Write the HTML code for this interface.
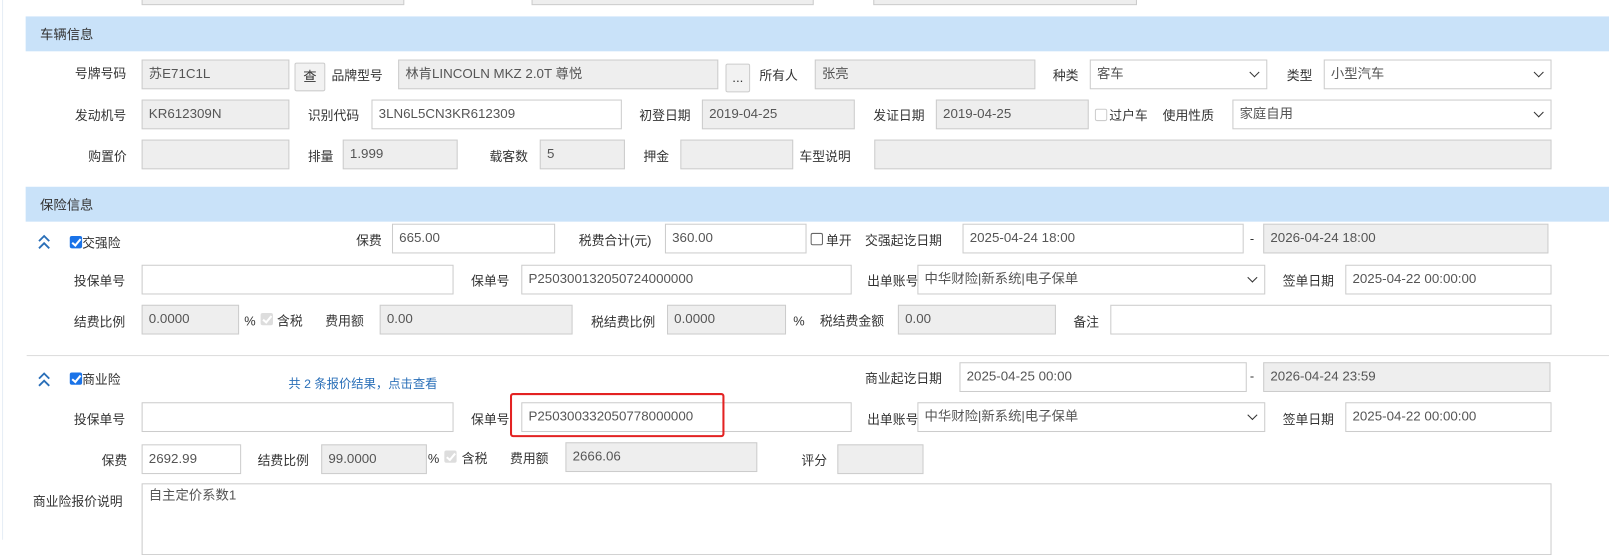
<!DOCTYPE html>
<html><head><meta charset="utf-8"><style>
*{box-sizing:border-box;margin:0;padding:0}
body{width:1609px;height:526px;background:#fff;position:relative;overflow:hidden;font-family:"Liberation Sans","Noto Sans CJK SC",sans-serif;font-size:13px;color:#333}
#w{position:absolute;left:0;top:0;width:1568px;height:513px;transform:scale(1.02615);transform-origin:0 0}
.a{position:absolute}
.l{position:absolute;white-space:nowrap;line-height:16px;font-size:12.5px}
.i{position:absolute;border:1px solid #ccc;background:#eee;height:29px;padding:4px 6px;color:#555;white-space:nowrap;line-height:18px}
.w{background:#fff}
.s:after{content:"";position:absolute;right:8px;top:8px;width:6px;height:6px;border-right:1.5px solid #333;border-bottom:1.5px solid #333;transform:rotate(45deg)}
.h{position:absolute;left:25px;right:0;height:34px;background:#c9e2f9;padding:10px 14px;line-height:16px}
.b{position:absolute;border:1px solid #ccc;background:#f2f2f2;border-radius:2px;height:28px;text-align:center;line-height:26px}
.cb{position:absolute;width:12px;height:12px;border-radius:2px;background:#1a73e8}
.cb:after{content:"";position:absolute;left:3.5px;top:1px;width:3px;height:7px;border-right:2px solid #fff;border-bottom:2px solid #fff;transform:rotate(40deg)}
.cg{background:#ddd}
.ce{position:absolute;width:12px;height:12px;border:1px solid #666;border-radius:2px;background:#fff}
.ch{position:absolute;width:14px;height:16px}
</style></head><body><div id="w">
<div class="a" style="left:2px;top:0;width:1px;height:526px;background:#e6eef5"></div>
<div class="i" style="left:138px;top:-24px;width:256px"></div>
<div class="i" style="left:518px;top:-24px;width:275px"></div>
<div class="i" style="left:851px;top:-24px;width:257px"></div>

<div class="h" style="top:16px">车辆信息</div>
<div class="l" style="left:73px;top:64px">号牌号码</div>
<div class="i" style="left:138px;top:58px;width:144px">苏E71C1L</div>
<div class="b" style="left:287px;top:61px;width:30px">查</div>
<div class="l" style="left:323px;top:66px">品牌型号</div>
<div class="i" style="left:388px;top:58px;width:312px">林肯LINCOLN MKZ 2.0T 尊悦</div>
<div class="b" style="left:707px;top:62px;width:24px">...</div>
<div class="l" style="left:740px;top:66px">所有人</div>
<div class="i" style="left:794px;top:58px;width:215px">张亮</div>
<div class="l" style="left:1026px;top:66px">种类</div>
<div class="i w s" style="left:1062px;top:58px;width:173px">客车</div>
<div class="l" style="left:1254px;top:66px">类型</div>
<div class="i w s" style="left:1290px;top:58px;width:222px">小型汽车</div>

<div class="l" style="left:73px;top:105px">发动机号</div>
<div class="i" style="left:138px;top:97px;width:144px">KR612309N</div>
<div class="l" style="left:300px;top:105px">识别代码</div>
<div class="i w" style="left:362px;top:97px;width:244px">3LN6L5CN3KR612309</div>
<div class="l" style="left:623px;top:105px">初登日期</div>
<div class="i" style="left:684px;top:97px;width:149px">2019-04-25</div>
<div class="l" style="left:851px;top:105px">发证日期</div>
<div class="i" style="left:912px;top:97px;width:149px">2019-04-25</div>
<div class="ce" style="left:1067px;top:106px;border-color:#ccc"></div>
<div class="l" style="left:1081px;top:105px">过户车</div>
<div class="l" style="left:1133px;top:105px">使用性质</div>
<div class="i w s" style="left:1201px;top:97px;width:311px">家庭自用</div>

<div class="l" style="left:86px;top:145px">购置价</div>
<div class="i" style="left:138px;top:136px;width:144px"></div>
<div class="l" style="left:300px;top:145px">排量</div>
<div class="i" style="left:334px;top:136px;width:112px">1.999</div>
<div class="l" style="left:477px;top:145px">载客数</div>
<div class="i" style="left:526px;top:136px;width:83px">5</div>
<div class="l" style="left:627px;top:145px">押金</div>
<div class="i" style="left:663px;top:136px;width:110px"></div>
<div class="l" style="left:779px;top:145px">车型说明</div>
<div class="i" style="left:852px;top:136px;width:660px"></div>

<div class="h" style="top:182px">保险信息</div>

<svg class="ch" style="left:36px;top:228px" viewBox="0 0 14 16"><path d="M2 7L7 2L12 7M2 14L7 9L12 14" fill="none" stroke="#2a6fb8" stroke-width="1.8"/></svg>
<div class="cb" style="left:68px;top:230px"></div>
<div class="l" style="left:80px;top:229px">交强险</div>
<div class="l" style="left:347px;top:227px">保费</div>
<div class="i w" style="left:382px;top:218px;width:159px">665.00</div>
<div class="l" style="left:564px;top:227px">税费合计(元)</div>
<div class="i w" style="left:648px;top:218px;width:138px">360.00</div>
<div class="ce" style="left:790px;top:227px"></div>
<div class="l" style="left:805px;top:227px">单开</div>
<div class="l" style="left:843px;top:227px">交强起讫日期</div>
<div class="i w" style="left:938px;top:218px;width:274px">2025-04-24 18:00</div>
<div class="l" style="left:1218px;top:225px">-</div>
<div class="i" style="left:1231px;top:218px;width:278px">2026-04-24 18:00</div>

<div class="l" style="left:72px;top:266px">投保单号</div>
<div class="i w" style="left:138px;top:258px;width:304px"></div>
<div class="l" style="left:459px;top:266px">保单号</div>
<div class="i w" style="left:508px;top:258px;width:322px">P250300132050724000000</div>
<div class="l" style="left:845px;top:266px">出单账号</div>
<div class="i w s" style="left:894px;top:258px;width:339px">中华财险|新系统|电子保单</div>
<div class="l" style="left:1250px;top:266px">签单日期</div>
<div class="i w" style="left:1311px;top:258px;width:201px">2025-04-22 00:00:00</div>

<div class="l" style="left:72px;top:306px">结费比例</div>
<div class="i" style="left:138px;top:297px;width:95px">0.0000</div>
<div class="l" style="left:238px;top:305px">%</div>
<div class="cb cg" style="left:254px;top:305px"></div>
<div class="l" style="left:270px;top:305px">含税</div>
<div class="l" style="left:317px;top:305px">费用额</div>
<div class="i" style="left:370px;top:297px;width:188px">0.00</div>
<div class="l" style="left:576px;top:306px">税结费比例</div>
<div class="i" style="left:650px;top:297px;width:116px">0.0000</div>
<div class="l" style="left:773px;top:305px">%</div>
<div class="l" style="left:799px;top:305px">税结费金额</div>
<div class="i" style="left:875px;top:297px;width:154px">0.00</div>
<div class="l" style="left:1046px;top:306px">备注</div>
<div class="i w" style="left:1082px;top:297px;width:430px"></div>

<div class="a" style="left:26px;top:346px;right:0;height:1px;background:#ddd"></div>

<svg class="ch" style="left:36px;top:362px" viewBox="0 0 14 16"><path d="M2 7L7 2L12 7M2 14L7 9L12 14" fill="none" stroke="#2a6fb8" stroke-width="1.8"/></svg>
<div class="cb" style="left:68px;top:363px"></div>
<div class="l" style="left:80px;top:362px">商业险</div>
<div class="l" style="left:281px;top:366px;color:#2a6fb8;font-size:12px">共 2 条报价结果，点击查看</div>
<div class="l" style="left:843px;top:361px">商业起讫日期</div>
<div class="i w" style="left:935px;top:353px;width:280px">2025-04-25 00:00</div>
<div class="l" style="left:1218px;top:359px">-</div>
<div class="i" style="left:1231px;top:353px;width:280px">2026-04-24 23:59</div>

<div class="l" style="left:72px;top:401px">投保单号</div>
<div class="i w" style="left:138px;top:392px;width:304px"></div>
<div class="l" style="left:459px;top:401px">保单号</div>
<div class="i w" style="left:508px;top:392px;width:322px">P250300332050778000000</div>
<div class="a" style="left:497px;top:383px;width:209px;height:43px;border:2px solid #e32222;border-radius:3px"></div>
<div class="l" style="left:845px;top:401px">出单账号</div>
<div class="i w s" style="left:894px;top:392px;width:339px">中华财险|新系统|电子保单</div>
<div class="l" style="left:1250px;top:401px">签单日期</div>
<div class="i w" style="left:1311px;top:392px;width:201px">2025-04-22 00:00:00</div>

<div class="l" style="left:99px;top:441px">保费</div>
<div class="i w" style="left:138px;top:433px;width:97px">2692.99</div>
<div class="l" style="left:251px;top:441px">结费比例</div>
<div class="i" style="left:313px;top:433px;width:103px">99.0000</div>
<div class="l" style="left:417px;top:439px">%</div>
<div class="cb cg" style="left:433px;top:439px"></div>
<div class="l" style="left:450px;top:439px">含税</div>
<div class="l" style="left:497px;top:439px">费用额</div>
<div class="i" style="left:551px;top:431px;width:187px">2666.06</div>
<div class="l" style="left:781px;top:441px">评分</div>
<div class="i" style="left:816px;top:433px;width:84px"></div>

<div class="l" style="left:32px;top:481px">商业险报价说明</div>
<div class="i w" style="left:138px;top:471px;width:1374px;height:70px;padding-top:2px">自主定价系数1</div>
</div></body></html>
